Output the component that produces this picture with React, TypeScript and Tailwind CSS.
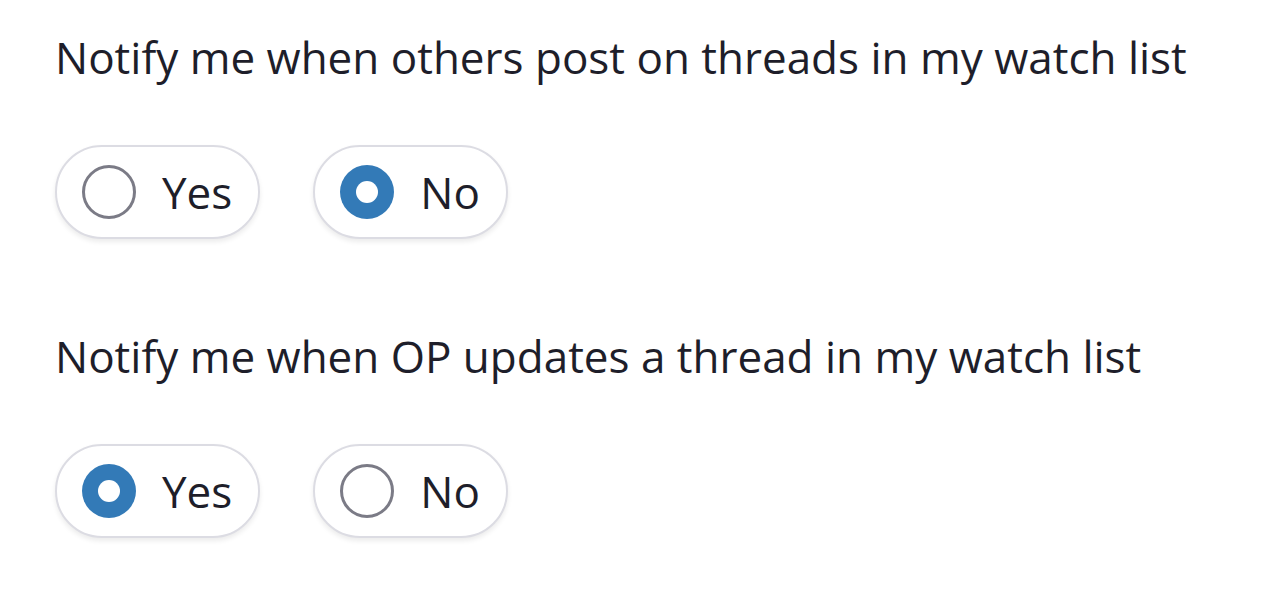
import { useState } from 'react';

type Choice = 'yes' | 'no';

const RadioPill = ({ label, checked, onSelect }: { label: string; checked: boolean; onSelect: () => void }) => (
  <label
    onClick={onSelect}
    className="flex items-center h-[94px] rounded-full border-2 border-[#dcdce3] bg-white pl-[25px] pr-[26px] gap-[26px] shadow-[0_3px_5px_rgba(0,0,0,0.08)] cursor-pointer"
  >
    {checked ? (
      <span className="w-[54px] h-[54px] rounded-full bg-[#337ab7] flex items-center justify-center">
        <span className="w-[22px] h-[22px] rounded-full bg-white" />
      </span>
    ) : (
      <span className="w-[54px] h-[54px] rounded-full border-[3px] border-[#7b7b86] bg-white" />
    )}
    <span className="text-[44px] leading-none text-[#1e1e2a]">{label}</span>
  </label>
);

const Question = ({ title, value, onChange }: { title: string; value: Choice; onChange: (v: Choice) => void }) => (
  <div className="flex flex-col">
    <p className="text-[44px] leading-[60px] whitespace-nowrap text-[#1e1e2a]">{title}</p>
    <div className="flex gap-[53px] mt-[58px]">
      <RadioPill label="Yes" checked={value === 'yes'} onSelect={() => onChange('yes')} />
      <RadioPill label="No" checked={value === 'no'} onSelect={() => onChange('no')} />
    </div>
  </div>
);

const App = () => {
  const [others, setOthers] = useState<Choice>('no');
  const [op, setOp] = useState<Choice>('yes');

  return (
    <div className="min-h-screen bg-white px-[55px] pt-[27px] font-['Open_Sans',sans-serif] flex flex-col gap-[87px]">
      <Question title="Notify me when others post on threads in my watch list" value={others} onChange={setOthers} />
      <Question title="Notify me when OP updates a thread in my watch list" value={op} onChange={setOp} />
    </div>
  );
};

export default App;
